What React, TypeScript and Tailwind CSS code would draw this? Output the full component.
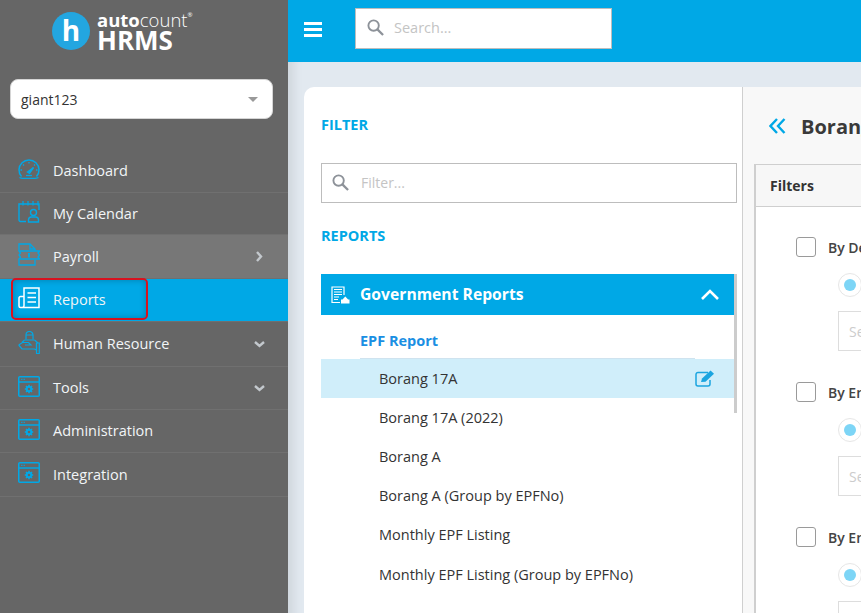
import React from "react";

const BLUE = "#00a8e6";

function Dashboard() {
  return (
    <svg width="22" height="20" viewBox="0 0 22 20" fill="none" stroke={BLUE} strokeWidth="1.500">
      <path d="M3.500 17.500A10 10 0 1 1 18.500 17.500" />
      <path d="M1.500 18.500c1 .5 2 .8 3 .8h12.500c1.200 0 2.200-.3 3.500-.8" strokeWidth="1.300" />
      <path d="M11 3v1.500M5 5.500l1 1M17 5.500l-1 1M2.500 11H4M19.500 11H18" strokeWidth="1.300" />
      <path d="M9.500 13l6-4.500-4 5.800z" fill={BLUE} />
      <path d="M8 16.500h6" strokeWidth="1.300" />
    </svg>
  );
}
function Calendar() {
  return (
    <svg width="22" height="23" viewBox="0 0 22 23" fill="none" stroke={BLUE} strokeWidth="1.400">
      <path d="M8 21.500H2.500a1.500 1.500 0 0 1-1.500-1.500V4h20v6" />
      <path d="M5 1v4.500M10 1v4.500M15 1v4.500M20 1v4.500" strokeWidth="1.200" />
      <circle cx="15.500" cy="12.500" r="3" />
      <path d="M10.500 22v-2a3 3 0 0 1 3-3h4a3 3 0 0 1 3 3v2z" />
    </svg>
  );
}
function Payroll() {
  return (
    <svg width="22" height="23" viewBox="0 0 22 23" fill="none" stroke={BLUE} strokeWidth="1.300">
      <path d="M1 7V1h11l5 5v2M1 17v5h16v-5" />
      <path d="M12 1v5h5" />
      <path d="M1 8h20.500L20 10l1.500 2-1.500 2 1.500 2H1l1.500-2L1 12l1.500-2z" />
      <path d="M11 10v4.500" strokeWidth="2" />
    </svg>
  );
}
function Reports() {
  return (
    <svg width="22" height="22" viewBox="0 0 22 22" fill="none" stroke="#fff" strokeWidth="1.500">
      <path d="M6 9V1h15v19.500H2.500A1.500 1.500 0 0 1 1 19v-8a1.500 1.500 0 0 1 1.500-1.500H6v9a2 2 0 0 1-2 2" />
      <path d="M9.500 6H18M9.500 10.500H18M9.500 15H18" strokeWidth="1.700" />
    </svg>
  );
}
function HumanResource() {
  return (
    <svg width="22" height="23" viewBox="0 0 22 23" fill="none" stroke={BLUE} strokeWidth="1.200">
      <path d="M8 8.500V4a3.500 3.500 0 0 1 7 0v4.500" />
      <path d="M8 4h7M6.500 9h10" />
      <path d="M4 11.500l2.500-2.500M16.500 9l3.500 3" />
      <path d="M.7 14l3.800-2.500h6l2.500 2.500H7M.7 14l3.300 4h12.500l2 1v-7" />
      <path d="M18.500 12H21.300v10.500H18.500z" />
    </svg>
  );
}
function Window() {
  return (
    <svg width="22" height="21" viewBox="0 0 22 21" fill="none" stroke={BLUE} strokeWidth="1.500">
      <rect x="0.750" y="0.750" width="20.500" height="19.500" rx="1" />
      <path d="M1 6h20" />
      <path d="M3 3.300h1.500M5.500 3.300H7" strokeWidth="1" />
      <circle cx="11" cy="13" r="2.300" strokeWidth="2" />
      <path d="M11 8.800V10M11 16v1.200M6.800 13H8M14 13h1.200M8 10l.9.900M13.100 15.100l.9.900M14 10l-.9.900M8.900 15.100l-.9.900" strokeWidth="1.500" />
    </svg>
  );
}
function Chevron({ dir }: { dir: "right" | "down" | "up" }) {
  const d = dir === "right" ? "M3 1l4 4.500-4 4.500" : "M1 3l4.500 4 4.500-4";
  return (
    <svg width="11" height="11" viewBox="0 0 11 11" fill="none" stroke="#c3c8cd" strokeWidth="2.400">
      <path d={d} />
    </svg>
  );
}
function SearchIcon() {
  return (
    <svg width="17" height="17" viewBox="0 0 18 18" fill="none" stroke="#8d9299" strokeWidth="2">
      <circle cx="7" cy="7" r="5.500" />
      <path d="M11 11l6 6" strokeWidth="2.400" />
    </svg>
  );
}

const nav = [
  { label: "Dashboard", icon: <Dashboard />, h: "h-[44px]" },
  { label: "My Calendar", icon: <Calendar />, h: "h-[42px]" },
  { label: "Payroll", icon: <Payroll />, h: "h-[44px]", chev: "right" as const, bg: "bg-[#777777]" },
  { label: "Reports", icon: <Reports />, h: "h-[43px]", bg: "bg-[#00a8e6]" },
  { label: "Human Resource", icon: <HumanResource />, h: "h-[45px]", chev: "down" as const },
  { label: "Tools", icon: <Window />, h: "h-[43px]", chev: "down" as const },
  { label: "Administration", icon: <Window />, h: "h-[43px]" },
  { label: "Integration", icon: <Window />, h: "h-[44px]" },
];

const reports = ["Borang 17A", "Borang 17A (2022)", "Borang A", "Borang A (Group by EPFNo)", "Monthly EPF Listing", "Monthly EPF Listing (Group by EPFNo)"];
const groups = ["By Department", "By Employee", "By Employment"];

export default function App() {
  return (
    <div className="flex h-[613px] w-[861px] overflow-hidden font-['Open_Sans',sans-serif] text-[14.500px] text-[#333]">
      <aside className="relative flex w-[288px] shrink-0 flex-col bg-[#666666] text-white">
        <div className="flex h-[62px] items-start pl-[52px] pt-[12px]">
          <div className="mr-[7px] flex h-[38px] w-[38px] items-center justify-center rounded-full bg-[#23a6e0] pb-[2px] text-[28px] font-bold leading-none">h</div>
          <div className="flex flex-col">
            <div className="flex h-[16px] items-center text-[18.500px] leading-none">
              <span className="font-bold">auto</span>
              <span className="font-light">count</span>
              <span className="-translate-y-[5px] text-[6px]">®</span>
            </div>
            <div className="mt-[-1px] text-[26px] font-bold leading-[26px]">HRMS</div>
          </div>
        </div>
        <div className="px-[10px] pt-[17px]">
          <div className="flex h-[40px] w-[263px] items-center justify-between rounded-[8px] border border-[#d5d5d5] bg-white pl-[10px] pr-[14px] text-[14px] text-[#333]">
            <span>giant123</span>
            <span className="h-0 w-0 border-x-[5px] border-t-[5px] border-x-transparent border-t-[#999]" />
          </div>
        </div>
        <nav className="mt-[30px]">
          {nav.map((n) => (
            <div key={n.label} className={`flex items-center border-b border-[#707070] pl-[18px] pr-[23px] ${n.h} ${n.bg ?? ""}`}>
              <span className="flex w-[35px] -translate-y-[2px] justify-start">{n.icon}</span>
              <span className="flex-1 text-[#f2f5f7]">{n.label}</span>
              {n.chev && <Chevron dir={n.chev} />}
            </div>
          ))}
        </nav>
        <div className="absolute left-[11px] top-[278px] h-[42px] w-[137px] rounded-[5px] border-2 border-[#d8121f] shadow-[inset_0_0_6px_rgba(0,0,0,0.25)]" />
      </aside>

      <div className="flex min-w-0 flex-1 flex-col">
        <header className="flex h-[62px] shrink-0 items-center bg-[#00a8e6]">
          <div className="ml-[16px] mt-[-3px] flex w-[18px] flex-col gap-[3px]">
            <span className="h-[3px] bg-white" />
            <span className="h-[3px] bg-white" />
            <span className="h-[3px] bg-white" />
          </div>
          <div className="ml-[33px] mt-[-6px] flex h-[41px] w-[257px] items-center border border-[#bdbdbd] bg-white pb-[1px] pl-[11px]">
            <SearchIcon />
            <span className="ml-[10px] text-[#c4c4c4]">Search...</span>
          </div>
        </header>

        <main className="flex flex-1 bg-[#e2e9f0] pl-[16px] pt-[25px] shadow-[inset_14px_0_10px_-8px_rgba(0,0,0,0.08)]">
          <div className="flex w-[600px] shrink-0 overflow-hidden rounded-tl-[10px] bg-white">
            <section className="w-[439px] shrink-0 border-r border-[#cfcfcf] pl-[17px] pr-[5px]">
              <h2 className="mt-[28px] font-bold leading-[19px] text-[#00a8e6]">FILTER</h2>
              <div className="mt-[29px] flex h-[40px] w-[416px] items-center border border-[#bdbdbd] pb-[1px] pl-[10px]">
                <SearchIcon />
                <span className="ml-[12px] text-[14px] text-[#c4c4c4]">Filter...</span>
              </div>
              <h2 className="mt-[23px] font-bold leading-[19px] text-[#00a8e6]">REPORTS</h2>

              <div className="relative mt-[29px] w-[416px] pr-[3px]">
                <div className="absolute right-0 top-0 h-[139px] w-[3px] bg-[#cccccc]" />
                <div className="flex h-[41px] items-center bg-[#00a8e6] pl-[10px] pr-[14px] text-white">
                  <svg width="19" height="18" viewBox="0 0 19 18" fill="none" stroke="#fff" strokeWidth="1.200">
                    <path d="M9 16.500H1V1h12v8" />
                    <path d="M3 3.500h8M3 6h8M3 8.500h8M3 11h5M3 13.500h4" />
                    <path d="M10 17.500h8.500v-4H10zM11.500 13.500l2.800-3 2.800 3z" fill="#fff" stroke="none" />
                  </svg>
                  <span className="ml-[10px] flex-1 text-[15.700px] font-bold">Government Reports</span>
                  <svg width="20" height="12" viewBox="0 0 20 12" fill="none" stroke="#fff" strokeWidth="2.600">
                    <path d="M2 10l8-8 8 8" />
                  </svg>
                </div>
                <div className="ml-[39px] mr-[39px] flex h-[44px] items-end border-b border-[#cfe3ef] pb-[6px] font-bold text-[#1a8fe3]">EPF Report</div>
                {reports.map((r, i) => (
                  <div key={r} className={`flex h-[39.200px] items-center pl-[58px] pr-[18px] ${i === 0 ? "bg-[#d0eefa]" : ""}`}>
                    <span className="flex-1">{r}</span>
                    {i === 0 && (
                      <svg width="21" height="17" viewBox="0 0 21 17" fill="none" stroke="#1ba5e0" strokeWidth="1.500">
                        <path d="M13 2.500H3a2 2 0 0 0-2 2v9.500a2 2 0 0 0 2 2h10a2 2 0 0 0 2-2V10" />
                        <path d="M6 12l1-3.500L15.500.5l3.500 3.200-8.500 8z" fill="#1ba5e0" stroke="none" />
                      </svg>
                    )}
                  </div>
                ))}
              </div>
            </section>

            <section className="flex-1 bg-[#f8f8f8] pl-[11px]">
              <div className="flex h-[77px] items-center">
                <svg className="ml-[15px]" width="17" height="16" viewBox="0 0 17 16" fill="none" stroke={BLUE} strokeWidth="2.400">
                  <path d="M8 1L1.500 8 8 15M15.500 1L9 8l6.500 7" />
                </svg>
                <span className="ml-[15px] translate-y-[1px] whitespace-nowrap text-[20px] font-bold text-[#3a3a3a]">Borang 17A</span>
              </div>
              <div className="h-[600px] border-l-2 border-t border-[#cfcfcf] bg-white">
                <div className="flex h-[42px] items-center border-b border-[#cfcfcf] bg-[#f7f7f7] pl-[14px] text-[14px] font-bold">Filters</div>
                <div className="pl-[40px] pt-[30px]">
                  {groups.map((g) => (
                    <div key={g} className="h-[145px]">
                      <div className="flex h-[20px] items-center">
                        <span className="h-[20px] w-[20px] rounded-[3px] border border-[#9a9a9a] bg-white" />
                        <span className="ml-[12px] whitespace-nowrap text-[14px] font-semibold text-[#444]">{g}</span>
                      </div>
                      <div className="ml-[42px] mt-[16px] flex h-[24px] w-[24px] items-center justify-center rounded-full border border-[#e6e6e6]">
                        <span className="h-[12px] w-[12px] rounded-full bg-[#7dd5f6]" />
                      </div>
                      <div className="ml-[42px] mt-[14px] flex h-[40px] w-[200px] items-center border border-[#dddddd] pl-[10px] text-[14px] text-[#cccccc]">Select...</div>
                    </div>
                  ))}
                </div>
              </div>
            </section>
          </div>
        </main>
      </div>
    </div>
  );
}
